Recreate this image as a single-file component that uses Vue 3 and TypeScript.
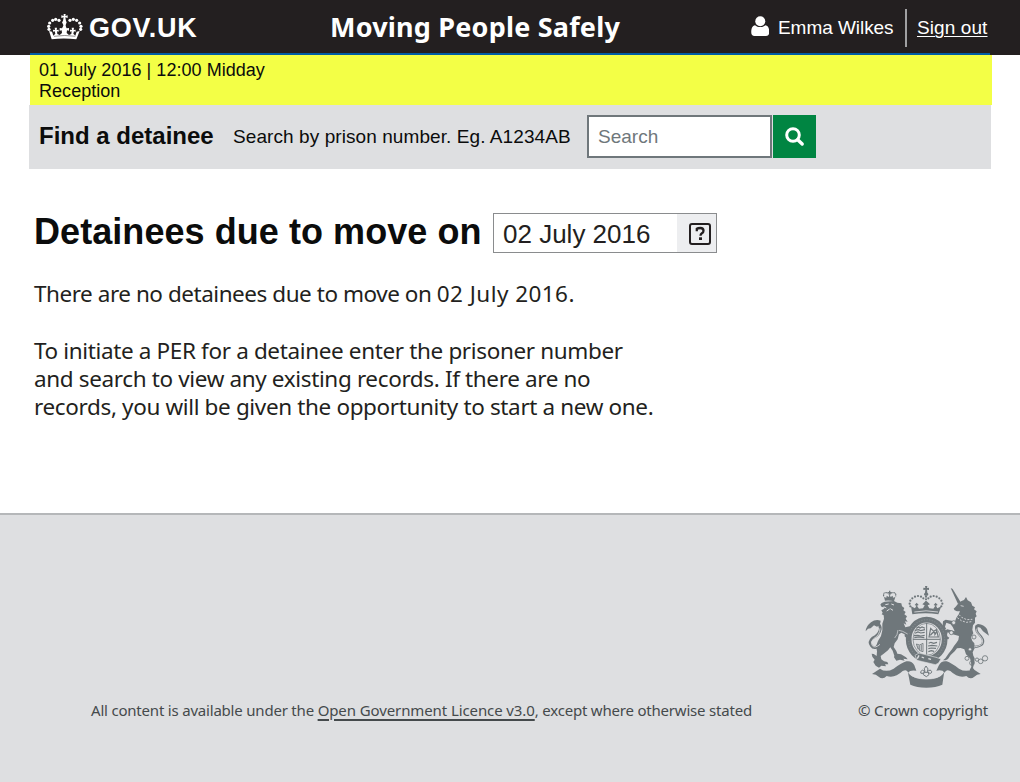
<script setup lang="ts">
import { ref } from 'vue'

const user = 'Emma Wilkes'
const moveDate = '02 July 2016'
const prisonNumber = ref('')

const crownPearls: number[][] = [
  [85, 78], [88, 68], [97, 60], [106, 57], [116, 60], [149, 60], [159, 57], [169, 60], [178, 68], [182, 78], [86, 87], [181, 87],
]
const crestPearls: number[][] = [
  [151, 79], [149, 71], [151, 62], [157, 55], [165, 50], [174, 48], [183, 50], [190, 55],
  [205, 55], [212, 50], [221, 48], [230, 50], [238, 55], [244, 62], [247, 71], [244, 79],
  [198, 50], [198, 58], [198, 66],
]
</script>

<template>
  <div class="page">
    <header class="masthead">
      <div class="masthead-row">
        <svg class="crown" viewBox="80 38 108 82" fill="#fff">
          <circle v-for="(p, i) in crownPearls" :key="i" :cx="p[0]" :cy="p[1]" r="4.8" />
          <path d="M130 41h6l-1 6 7-2v8l-7-2 2 11 2 4-3 8v8h-7v-8l-4-8 3-4 2-11-7 2v-8l7 2z" />
          <path d="M86 92l9 2 4 12 6-6-2-7-5 1v-6l6 1-1-7h7l-1 7 6-1v6l-5-1 1 8 7 3 7-6-1-8-6 1v-8l7 1 4-8h6l4 8 7-1v8l-6-1-1 8 7 6 7-3 1-8-5 1v-6l6 1-1-7h7l-1 7 6-1v6l-5-1-2 7 6 6 4-12 9-2-10 25q-38-5-74 0z" />
          <path d="M101 108q32-5 64 0" fill="none" stroke="#231f20" stroke-width="1.5" />
        </svg>
        <span class="brand">GOV.UK</span>
        <span class="service">Moving People Safely</span>
        <svg class="person" viewBox="0 0 18 20" fill="#fff">
          <circle cx="9" cy="5.2" r="5" />
          <path d="M3.8 9.2C1 9.5 0 12.5 0 16.3 0 19 1.2 20 3.2 20h11.6c2 0 3.2-1 3.2-3.7 0-3.8-1-6.8-3.8-7.1-2.8 2.5-7.6 2.5-10.4 0z" />
        </svg>
        <span class="user">{{ user }}</span>
        <i class="divider"></i>
        <a class="signout">Sign out</a>
      </div>
      <div class="accent"></div>
    </header>

    <section class="status">
      <div><span class="when">01 July 2016 | 12:00 Midday</span></div>
      <div><span class="where">Reception</span></div>
    </section>

    <form class="finder" @submit.prevent>
      <label class="find-title">Find a detainee</label>
      <span class="find-hint">Search by prison number. Eg. A1234AB</span>
      <input v-model="prisonNumber" class="find-input" placeholder="Search" />
      <button class="find-button">
        <svg viewBox="0 0 20 20" width="20" height="20" fill="none" stroke="#fff">
          <circle cx="8" cy="8" r="6.3" stroke-width="3" />
          <path d="M12.700 12.700l4.500 4.300" stroke-width="3.400" stroke-linecap="round" />
        </svg>
      </button>
    </form>

    <main>
      <div class="heading">
        <h1>Detainees due to move on</h1>
        <div class="date">
          <span class="date-value">{{ moveDate }}</span>
          <span class="date-icon">
            <svg viewBox="0 0 22 22" width="22" height="22">
              <rect x="1" y="1" width="20" height="20" rx="2" fill="none" stroke="#231f20" stroke-width="2" />
              <path d="M7.800 8.200V5.800Q9 5 11.300 5q3.200 0 3.200 2.700 0 1.600-1.600 2.600-1.400.900-1.400 2.400" fill="none" stroke="#231f20" stroke-width="2.300" />
              <rect x="10" y="14.300" width="3" height="2.700" fill="#231f20" />
            </svg>
          </span>
        </div>
      </div>
      <p class="none">There are no detainees due to move on <span class="none-date">{{ moveDate }}.</span></p>
      <p class="help">
        <span>To initiate a PER for a detainee enter the prisoner number</span><br />
        <span>and search to view any existing records. If there are no</span><br />
        <span>records, you will be given the opportunity to start a new one.</span>
      </p>
    </main>

    <footer>
      <svg class="crest" viewBox="0 0 420 345" fill="#6f777b">
        <!-- centre crown -->
        <path d="M195 18h7l-1 6 6-1v7l-6-1 1 9q6 5 0 9h-7q-6-4 0-9l1-9-6 1v-7l6 1z" />
        <circle v-for="(p, i) in crestPearls" :key="i" :cx="p[0]" :cy="p[1]" r="3.300" />
        <path d="M153 79l12 6 4-8-5-2 6-7 6 7-5 2 6 9 12-1 5-9-7-3 8-8h7l8 8-7 3 5 9 12 1 6-9-5-2 6-7 6 7-5 2 4 8 12-6-9 24q-39-7-78 0z" />
        <path d="M163 96q35-7 71 0" fill="none" stroke="#dedfe1" stroke-width="2.500" />
        <!-- garter and shield -->
        <ellipse cx="200" cy="178" rx="54" ry="59" fill="none" stroke="#6f777b" stroke-width="17" />
        <ellipse cx="200" cy="178" rx="54" ry="59" fill="none" stroke="#7d8589" stroke-width="4" stroke-dasharray="4 4" />
        <ellipse cx="200" cy="178" rx="41" ry="48" fill="none" stroke="#6f777b" stroke-width="2" />
        <path d="M200 129v96M159 178h82" fill="none" stroke="#6f777b" stroke-width="3" />
        <path d="M169 145l6-4 5 3 6-3 9 4M164 151l12-2 6 3 13-3M165 160l9-4 8 3 12-2M162 167l12-1 8 2 12-2M163 173l14-2 16 2M206 190l7-3 8 3 10-3M204 198l12-2 16 2M205 206l9-2 14 1M205 215l9-3 8 2M207 171l5-26 9 9 8-5 6 22z" fill="none" stroke="#6f777b" stroke-width="3.500" />
        <path d="M211 166q13-17 14-3l6-9" fill="none" stroke="#6f777b" stroke-width="4" />
        <path d="M169 192q10 7 20-2v25q-15-2-20-23zM174 196v12M179 196v16M184 194v18" fill="none" stroke="#6f777b" stroke-width="2.500" />
        <!-- lion -->
        <path d="M75 62L72 51l7 2 1-6 6 4 3-6 3 6 6-4 1 6 7-2-4 13q-13-4-27-2z" />
        <path d="M71 49Q69 36 80 38q5 0 9 7 4-7 9-7 11-2 9 11" fill="none" stroke="#6f777b" stroke-width="3.500" stroke-dasharray="3 1" />
        <path d="M87 32h4v4h4v3h-4v4h-4v-4h-4v-3h4z" />
        <path d="M74 65L102 63 112 68 124 70 126 79 133 84 130 91 137 96 133 103 141 109 137 116 143 125 135 124 139 134 131 130 136 142 149 139 152 146 147 149 153 154 147 159 153 167 147 172 152 177 145 183 139 174 134 169 134 163 124 158 117 163 113 178 104 190 101 201 109 213 112 221 123 223 138 232 143 238 130 236 134 242 120 239 109 242 102 232 103 227 98 212 91 202 84 211 71 221 62 228 64 238 72 244 82 246 85 253 75 253 78 259 64 257 57 263 47 257 40 246 44 239 37 230 35 221 41 222 50 228 51 214 48 199 54 183 63 168 67 151 67 131 72 116 71 106 65 103 68 98 64 91 71 87 75 82 65 81 61 74 65 69z" />
        <path d="M76 74l10-2M94 72l8 3M71 80l8 4M80 93l9-6M91 86l8 5" stroke="#dedfe1" stroke-width="3" />
        <path d="M62 192Q44 211 34 197 25 185 38 174 58 165 61 147 62 136 52 129" fill="none" stroke="#6f777b" stroke-width="8" />
        <path d="M60 193Q44 207 36 196 30 185 41 176 60 165 60 145" fill="none" stroke="#dedfe1" stroke-width="2.500" />
        <path d="M17 154Q18 138 33 127 46 117 62 122 61 136 51 140L42 136 32 145 24 146z" />
        <path d="M117 151l11 3 15 8M114 150q-1 15-10 24" stroke="#dedfe1" stroke-width="2" fill="none" />
        <!-- unicorn -->
        <path d="M272 24L278 27 303 68 294 72z" />
        <path d="M293 73L303 64 312 60 318 51 323 61 333 67 337 77 345 82 342 88 350 94 347 101 350 109 345 113 345 128 339 136 337 149 340 160 333 172 337 183 343 190 344 204 338 217 340 227 344 235 343 247 339 264 343 270 334 275 329 270 334 261 333 246 330 235 318 223 313 208 302 204 291 205 284 214 272 225 264 237 257 241 249 241 256 235 267 219 276 208 282 198 289 189 295 180 297 168 289 166 275 162 263 157 260 168 268 173 265 178 257 176 253 165 254 152 262 148 284 154 278 141 272 133 259 128 255 140 259 148 250 146 248 134 249 124 257 119 275 122 284 127 289 113 296 103 300 94 291 94 284 91 281 86 287 80z" />
        <path d="M297 104l8 8 15 7 17-1M292 113l12 9 15 5 15-2" fill="none" stroke="#dedfe1" stroke-width="2.500" stroke-dasharray="6 4" />
        <path d="M302 77l9 2" stroke="#dedfe1" stroke-width="2.500" />
        <path d="M342 201Q367 199 369 187 371 177 359 165 345 152 350 137" fill="none" stroke="#6f777b" stroke-width="7" />
        <path d="M342 201Q366 198 368 187 370 178 358 165 344 152 350 140" fill="none" stroke="#dedfe1" stroke-width="2.500" />
        <path d="M346 150Q343 135 354 132 372 134 381 147L387 167 376 159 369 154 361 143 353 141z" />
        <g fill="none" stroke="#6f777b" stroke-width="2.500">
          <circle cx="321" cy="235" r="6" /><circle cx="336" cy="249" r="7" /><circle cx="351" cy="239" r="5" />
          <circle cx="362" cy="244" r="7" /><circle cx="375" cy="235" r="8" />
        </g>
        <g fill="#dedfe1" stroke="#6f777b" stroke-width="2.500">
          <circle cx="281" cy="128" r="6" /><circle cx="274" cy="158" r="6" /><circle cx="342" cy="171" r="6" /><circle cx="330" cy="208" r="5" />
        </g>
        <!-- buckle -->
        <path d="M165 226l12-7 51 13 15 5-8 13-9 4-55-13z" stroke="#dedfe1" stroke-width="2" />
        <path d="M177 226l-5 10M185 231l7 3M205 236l8 2" stroke="#dedfe1" stroke-width="4" />
        <!-- motto scroll -->
        <path d="M36 282L60 266Q78 279 101 266 126 248 139 244 155 241 163 256L169 272Q150 269 145 278 141 266 128 273 104 296 80 288 68 301 56 290 49 282 36 282z" />
        <path d="M362 282L338 266Q319 279 297 266 274 249 260 244 244 241 236 257L229 272Q247 268 254 278 258 266 271 273 295 296 319 288 331 301 343 290 350 282 362 282z" />
        <path d="M143 273q9 24 56 24t54-24l-6 41q-19 9-48 9t-48-9z" />
        <path d="M145 278q15 19 54 19t51-19" fill="none" stroke="#dedfe1" stroke-width="2.500" />
        <path d="M198 258q-9 8-3 17-9-9-13 0-2 7 7 5l3-2-2 6 9 6 8-6-2-6q10 5 10-3-3-9-13 0 6-8-4-17zM191 277h16" fill="none" stroke="#6f777b" stroke-width="3" />
      </svg>
      <div class="legal">
        <span class="licence">All content is available under the <a>Open Government Licence v3.0</a>, except where otherwise stated</span>
        <span class="copyright">© Crown copyright</span>
      </div>
    </footer>
  </div>
</template>

<style>
body {
  margin: 0;
  background: #fff;
}
</style>

<style scoped>
.page {
  width: 1020px;
  height: 782px;
  overflow: hidden;
  display: flex;
  flex-direction: column;
  font-family: "Liberation Sans", Arial, sans-serif;
  color: #0b0c0c;
  white-space: nowrap;
}
.masthead {
  height: 55px;
  flex: none;
  background: #231f20;
  color: #fff;
}
.masthead-row {
  height: 53px;
  display: flex;
  align-items: flex-start;
}
.accent {
  height: 2px;
  width: 960px;
  margin-left: 30px;
  background: #005ea5;
}
.crown {
  width: 36px;
  height: 27.3px;
  margin: 12.7px 0 0 46.7px;
}
.brand {
  width: 107px;
  margin: 12px 0 0 6.3px;
  font: bold 27px/32px "Liberation Sans", Arial, sans-serif;
  letter-spacing: 0.75px;
}
.service {
  width: 300px;
  margin: 8px 0 0 134px;
  font: bold 27px/38px "Noto Sans", sans-serif;
  letter-spacing: 0.2px;
}
.person {
  width: 18.5px;
  height: 20px;
  margin: 16px 0 0 121px;
}
.user {
  width: 116px;
  margin: 16px 0 0 8.5px;
  font-size: 19px;
  line-height: 24px;
  letter-spacing: -0.05px;
}
.divider {
  width: 2px;
  height: 38px;
  margin: 9px 0 0 11px;
  background: #a0a0a2;
}
.signout {
  margin: 16px 0 0 10px;
  font-size: 19px;
  line-height: 24px;
  text-decoration: underline;
  text-underline-offset: 2px;
  text-decoration-thickness: 1px;
  letter-spacing: 0.1px;
}
.status {
  width: 953px;
  height: 45px;
  flex: none;
  margin-left: 30px;
  padding: 5px 0 0 9px;
  background: #f3ff46;
  font-size: 18px;
  line-height: 21px;
  letter-spacing: 0.04px;
}
.finder {
  width: 952px;
  height: 64px;
  flex: none;
  margin-left: 29px;
  padding-left: 10px;
  display: flex;
  align-items: flex-start;
  background: #dedfe1;
}
.find-title {
  width: 194px;
  margin-top: 17px;
  font-size: 24px;
  line-height: 28px;
  font-weight: bold;
}
.find-hint {
  width: 354px;
  margin-top: 20px;
  font-size: 19px;
  line-height: 24px;
  letter-spacing: 0.08px;
}
.find-input {
  box-sizing: border-box;
  width: 185px;
  height: 43px;
  margin: 10px 1px 0 0;
  padding: 0 9px;
  border: 2px solid #6f777b;
  border-radius: 0;
  background: #fff;
  font: 19px "Liberation Sans", Arial, sans-serif;
}
.find-input::placeholder {
  color: #6f777b;
}
.find-button {
  width: 43px;
  height: 43px;
  margin-top: 10px;
  padding: 0;
  border: 0;
  background: #008542;
  display: grid;
  place-items: center;
}
main {
  height: 344px;
  flex: none;
  box-sizing: border-box;
  padding: 44px 0 0 34px;
  color: #231f20;
}
.heading {
  display: flex;
  height: 40px;
}
h1 {
  width: 459px;
  margin: -2px 0 0;
  font-size: 36px;
  line-height: 42px;
  letter-spacing: 0.06px;
  color: #0b0c0c;
}
.date {
  box-sizing: border-box;
  width: 224px;
  height: 40px;
  border: 1px solid #8a8c8e;
  display: flex;
  justify-content: space-between;
}
.date-value {
  padding-left: 9px;
  font-size: 26px;
  line-height: 41px;
}
.date-icon {
  box-sizing: border-box;
  width: 39px;
  padding: 9px 0 0 12px;
  background: #edeef0;
}
p {
  margin: 0;
  font: 22.5px/28px "Noto Sans", sans-serif;
  letter-spacing: -0.36px;
}
.none {
  margin-top: 27px;
  letter-spacing: -0.46px;
}
.none-date {
  letter-spacing: 0.45px;
}
.help {
  margin-top: 29px;
}
footer {
  flex: 1;
  border-top: 2px solid #b5b7b9;
  background: #dedfe1;
  color: #454a4c;
}
.crest {
  display: block;
  width: 140px;
  height: 115px;
  margin: 65px 0 0 860px;
}
.legal {
  display: flex;
  margin-top: 4px;
  padding-left: 91px;
  font: 15px/22px "Noto Sans", sans-serif;
  letter-spacing: -0.13px;
}
.licence {
  width: 767px;
  letter-spacing: -0.2px;
}
.licence a {
  letter-spacing: -0.1px;
  text-decoration: underline;
  text-decoration-thickness: 1.5px;
  text-underline-offset: 3px;
}
</style>
